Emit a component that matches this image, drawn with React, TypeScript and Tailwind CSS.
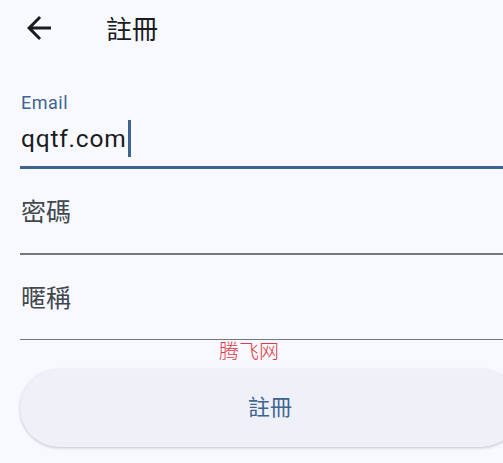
import React from "react";

function BackArrow() {
  return (
    <svg width="24" height="24" viewBox="4 4 16 16" className="shrink-0 text-[#1a1c1e]">
      <path
        fill="currentColor"
        d="M20 11H7.83l5.59-5.59L12 4l-8 8 8 8 1.41-1.41L7.83 13H20v-2z"
      />
    </svg>
  );
}

function PlainField({ placeholder }: { placeholder: string }) {
  return (
    <div className="pt-[31px]">
      <div className="ml-[1px] text-[25px] leading-[25px] text-[#43474e]">{placeholder}</div>
      <div className="mt-[28px] h-[1.5px] bg-[#73777f]" />
    </div>
  );
}

export default function App() {
  return (
    <div className="w-[503px] h-[463px] overflow-hidden bg-[#f8f9ff] font-[Roboto,'Noto_Sans_CJK_TC',sans-serif]">
      <div className="w-[540px]">
        {/* App bar */}
        <div className="flex items-center h-[56px]">
          <div className="ml-[27px]">
            <BackArrow />
          </div>
          <h1 className="ml-[55px] mt-[3px] text-[26px] leading-[30px] text-[#1a1c1e]">註冊</h1>
        </div>

        <div className="px-5">
          {/* Email */}
          <div className="pt-[35px]">
            <div className="ml-[1px] text-[18px] leading-6 tracking-[0.5px] text-[#3e6591]">Email</div>
            <div className="mt-[5px] flex items-center h-[37px]">
              <span className="ml-[1px] text-[24.5px] leading-8 tracking-[0.8px] text-[#1a1c1e]">qqtf.com</span>
              <span className="ml-[1px] w-[3px] h-[37px] bg-[#3e6591]" />
            </div>
            <div className="mt-[9px] h-[3px] bg-[#3e6591]" />
          </div>

          <PlainField placeholder="密碼" />
          <PlainField placeholder="暱稱" />

          <div className="ml-[199px] text-[20px] leading-[22px] text-[#e03a44] font-light font-['Noto_Sans_CJK_SC',sans-serif]">
            腾飞网
          </div>

          <button className="mt-[7px] w-[500px] h-[78px] rounded-full bg-[#f0f1f8] shadow-[0_1px_3px_rgba(0,0,0,0.22)] flex items-center justify-center">
            <span className="text-[22px] leading-6 text-[#3e6591]">註冊</span>
          </button>
        </div>
      </div>
    </div>
  );
}
